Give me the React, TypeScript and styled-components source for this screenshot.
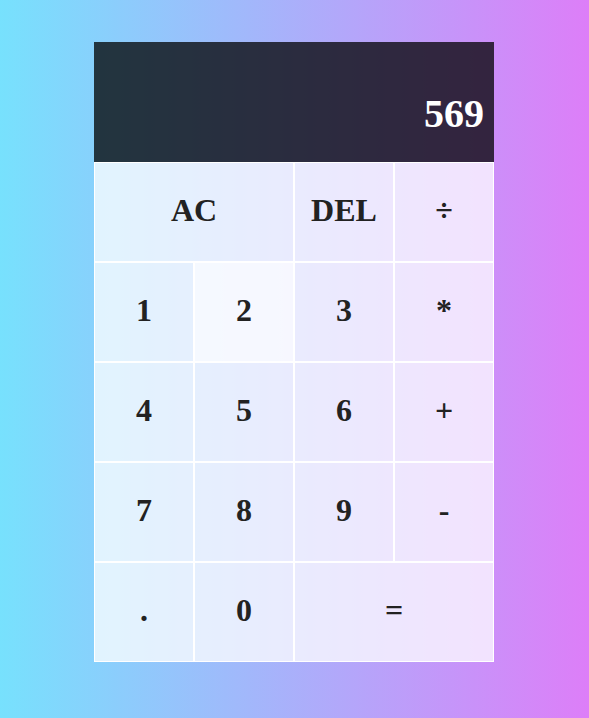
import React from "react";
import styled, { createGlobalStyle } from "styled-components";

const Global = createGlobalStyle`
  *, *::before, *::after { box-sizing: border-box; }
  html, body { margin: 0; padding: 0; }
  body {
    min-height: 100vh;
    background: linear-gradient(to right, #77e1fd, #dd7ef8);
    font-family: "Liberation Serif", "Times New Roman", serif;
  }
`;

const Grid = styled.div`
  display: grid;
  justify-content: start;
  align-content: start;
  padding: 42px 0 0 94px;
  min-height: 718px;
  grid-template-columns: repeat(4, 100px);
  grid-template-rows: 120px repeat(5, 100px);
`;

const Output = styled.div`
  grid-column: 1 / -1;
  background-color: rgba(0, 0, 0, 0.75);
  display: flex;
  flex-direction: column;
  align-items: flex-end;
  justify-content: space-around;
  padding: 10px 10px 12px;
  word-wrap: break-word;
  word-break: break-all;
`;

const Previous = styled.div`
  color: rgba(255, 255, 255, 0.75);
  font-size: 24px;
`;

const Current = styled.div`
  color: white;
  font-size: 40px;
  font-weight: bold;
`;

const Key = styled.button<{ $span?: number; $active?: boolean }>`
  grid-column: span ${(p) => p.$span ?? 1};
  font-family: "Liberation Serif", "Times New Roman", serif;
  font-size: 32px;
  font-weight: bold;
  color: #222;
  cursor: pointer;
  border: 1px solid white;
  outline: none;
  margin: 0;
  padding: 0 0 3px;
  background-color: ${(p) =>
    p.$active ? "rgba(255, 255, 255, 0.9)" : "rgba(255, 255, 255, 0.75)"};
`;

const keys: { label: string; span?: number; active?: boolean }[] = [
  { label: "AC", span: 2 },
  { label: "DEL" },
  { label: "÷" },
  { label: "1" },
  { label: "2", active: true },
  { label: "3" },
  { label: "*" },
  { label: "4" },
  { label: "5" },
  { label: "6" },
  { label: "+" },
  { label: "7" },
  { label: "8" },
  { label: "9" },
  { label: "-" },
  { label: "." },
  { label: "0" },
  { label: "=", span: 2 },
];

export default function App() {
  return (
    <>
      <Global />
      <Grid>
        <Output>
          <Previous></Previous>
          <Current>569</Current>
        </Output>
        {keys.map((k, i) => (
          <Key key={i} $span={k.span} $active={k.active}>
            {k.label}
          </Key>
        ))}
      </Grid>
    </>
  );
}
